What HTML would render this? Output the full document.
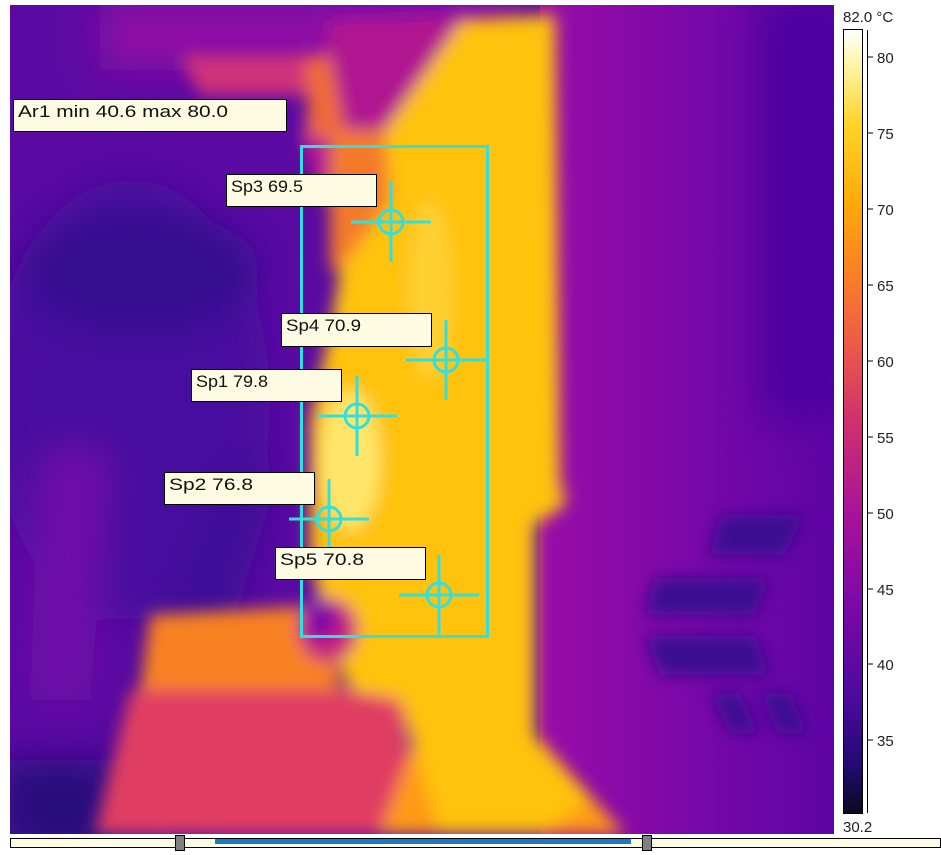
<!DOCTYPE html>
<html><head><meta charset="utf-8"><style>
html,body{margin:0;padding:0;background:#fff;width:941px;height:855px;overflow:hidden;font-family:"Liberation Sans","DejaVu Sans",sans-serif}
</style></head><body>
<svg width="941" height="855" viewBox="0 0 941 855" xmlns="http://www.w3.org/2000/svg" style="position:absolute;left:0;top:0">
<defs>
<filter id="b" x="-20%" y="-20%" width="140%" height="140%"><feGaussianBlur stdDeviation="8"/></filter>
<filter id="b2" x="-30%" y="-30%" width="160%" height="160%"><feGaussianBlur stdDeviation="20"/></filter>
<clipPath id="c"><rect x="10" y="5" width="824" height="829"/></clipPath>
<linearGradient id="cb" x1="0" y1="1" x2="0" y2="0">
<stop offset="0" stop-color="#0a0a20"/><stop offset="0.06" stop-color="#220a70"/><stop offset="0.14" stop-color="#4a0a9c"/>
<stop offset="0.26" stop-color="#7a08a8"/><stop offset="0.38" stop-color="#a8129a"/><stop offset="0.5" stop-color="#d0306e"/>
<stop offset="0.6" stop-color="#ee5a48"/><stop offset="0.68" stop-color="#fa7c28"/><stop offset="0.78" stop-color="#ffaa08"/>
<stop offset="0.88" stop-color="#ffd428"/><stop offset="0.96" stop-color="#fff6b0"/><stop offset="1" stop-color="#ffffff"/></linearGradient>
<linearGradient id="rg" x1="0" y1="0" x2="1" y2="0">
<stop offset="0" stop-color="#9a0ca8"/><stop offset="0.5" stop-color="#7a08a8"/><stop offset="1" stop-color="#5c04a4"/></linearGradient>
</defs>
<g clip-path="url(#c)">
<rect x="10" y="5" width="824" height="829" fill="#5a0aa2"/>
<rect x="540" y="0" width="300" height="840" fill="url(#rg)"/>
<g filter="url(#b2)">
<rect x="760" y="0" width="90" height="420" fill="#4e06a0"/>
<rect x="100" y="0" width="420" height="70" fill="#9010a6"/>
<ellipse cx="130" cy="400" rx="140" ry="220" fill="#46089e"/>
<ellipse cx="140" cy="270" rx="120" ry="60" fill="#340890"/>
<polygon points="40,450 110,450 90,700 30,700" fill="#7010a8"/>
<polygon points="230,460 280,470 170,834 90,834" fill="#3c0896"/>
<rect x="0" y="760" width="110" height="90" fill="#26087a"/>
</g>
<g filter="url(#b)">
<polygon points="180,55 330,55 330,95 200,95" fill="#d0307a"/>
<polygon points="330,20 470,15 440,140 390,200 320,200 300,140" fill="#b01890"/>
<polygon points="305,60 330,55 345,130 310,140" fill="#f06a38"/>
<polygon points="330,130 400,130 400,270 330,270" fill="#f47a2c"/>
<polygon points="130,690 400,690 420,834 95,834" fill="#e03c62"/>
<polygon points="150,615 330,605 340,690 140,690" fill="#f88222"/>
<polygon points="430,700 540,740 625,834 380,834" fill="#ff9a12"/>
<polygon points="462,20 555,15 560,500 565,480 565,505 535,525 535,735 590,800 540,834 440,834 420,770 400,700 350,690 330,640 310,560 310,420 330,330 340,270 390,200 385,130" fill="#ffc210"/>
<ellipse cx="350" cy="460" rx="30" ry="70" fill="#ffe66a"/>
<ellipse cx="430" cy="290" rx="22" ry="90" fill="#ffd030"/>
<ellipse cx="328" cy="630" rx="30" ry="32" fill="#c8207e"/>
<ellipse cx="320" cy="620" rx="18" ry="20" fill="#8410a4"/>
</g>
<g fill="#3a0892" filter="url(#b)">
<polygon points="722,515 805,515 785,555 708,555"/>
<polygon points="655,578 770,578 755,615 645,615"/>
<polygon points="645,636 755,636 770,675 660,675"/>
<polygon points="710,693 740,693 760,733 730,733"/>
<polygon points="760,693 790,693 808,733 778,733"/>
</g>
</g>
<g fill="none" stroke="#30e0e0" stroke-width="3">
<rect x="301.5" y="146.5" width="186" height="490"/>
<circle cx="391" cy="222" r="12"/><path d="M351 222h80M391 182v80"/>
<circle cx="446" cy="360" r="12"/><path d="M406 360h81M446 320v80"/>
<circle cx="357" cy="416" r="12"/><path d="M317 416h80M357 376v80"/>
<circle cx="329" cy="519" r="12"/><path d="M289 519h80M329 479v80"/>
<circle cx="439" cy="595" r="12"/><path d="M399 595h80M439 555v80"/>
</g>
<g font-size="17" fill="#111">
<rect x="13.5" y="99.5" width="273" height="32" fill="#fdfbe2" stroke="#000"/><text x="18" y="117" textLength="210" lengthAdjust="spacingAndGlyphs">Ar1 min 40.6 max 80.0</text>
<rect x="226.5" y="174.5" width="150" height="32" fill="#fdfbe2" stroke="#000"/><text x="231" y="192" textLength="72" lengthAdjust="spacingAndGlyphs">Sp3 69.5</text>
<rect x="281.5" y="313.5" width="150" height="33" fill="#fdfbe2" stroke="#000"/><text x="286" y="331" textLength="75" lengthAdjust="spacingAndGlyphs">Sp4 70.9</text>
<rect x="191.5" y="369.5" width="150" height="32" fill="#fdfbe2" stroke="#000"/><text x="196" y="387" textLength="72" lengthAdjust="spacingAndGlyphs">Sp1 79.8</text>
<rect x="164.5" y="472.5" width="150" height="32" fill="#fdfbe2" stroke="#000"/><text x="169" y="490" textLength="84" lengthAdjust="spacingAndGlyphs">Sp2 76.8</text>
<rect x="275.5" y="547.5" width="150" height="32" fill="#fdfbe2" stroke="#000"/><text x="280" y="565" textLength="84" lengthAdjust="spacingAndGlyphs">Sp5 70.8</text>
</g>
<rect x="843.5" y="29.5" width="19" height="784" fill="url(#cb)" stroke="#000"/>
<line x1="867.5" y1="30" x2="867.5" y2="813" stroke="#000"/>
<g stroke="#000">
<path d="M867 57h6M867 133h6M867 209h6M867 285h6M867 361h6M867 437h6M867 513h6M867 589h6M867 664h6M867 740h6"/>
</g>
<g font-size="15" fill="#222">
<text x="843" y="22">82.0 °C</text>
<text x="877" y="63">80</text><text x="877" y="139">75</text><text x="877" y="215">70</text>
<text x="877" y="291">65</text><text x="877" y="367">60</text><text x="877" y="443">55</text>
<text x="877" y="519">50</text><text x="877" y="595">45</text><text x="877" y="670">40</text>
<text x="877" y="746">35</text><text x="843" y="832">30.2</text>
</g>
<rect x="10.5" y="838.5" width="930" height="9" fill="#fdfbe2" stroke="#000"/>
<rect x="215" y="839" width="416" height="5" fill="#1a7ac8"/>
<rect x="175.5" y="835.5" width="9" height="15" fill="#808080" stroke="#000"/>
<rect x="642.5" y="835.5" width="9" height="15" fill="#808080" stroke="#000"/>
</svg>
</body></html>
